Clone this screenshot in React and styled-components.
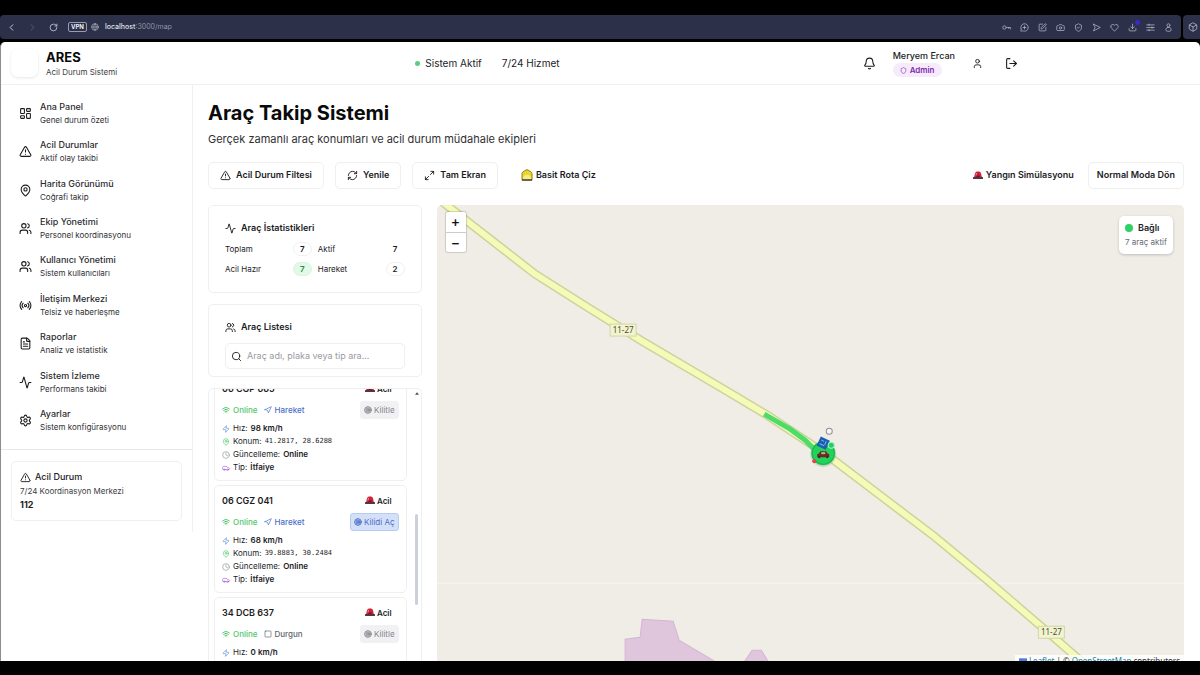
import React, { useEffect, useRef } from 'react';
import styled, { createGlobalStyle } from 'styled-components';
import {
  Activity, Bell, Box, Camera, Car, ChevronLeft, ChevronRight, Clock, Download, FileText, Globe,
  Heart, LayoutDashboard, LogOut, MapPin, Maximize2, MessageCirclePlus, Navigation, Radio,
  RefreshCw, RotateCw, Search, Settings, Shield, ShieldCheck, Square,
  SquarePen, Target, TriangleAlert, User, Users, Wifi, Zap,
} from 'lucide-react';

const menu = [
  { icon: LayoutDashboard, title: 'Ana Panel', text: 'Genel durum özeti' },
  { icon: TriangleAlert, title: 'Acil Durumlar', text: 'Aktif olay takibi' },
  { icon: MapPin, title: 'Harita Görünümü', text: 'Coğrafi takip' },
  { icon: Users, title: 'Ekip Yönetimi', text: 'Personel koordinasyonu' },
  { icon: Users, title: 'Kullanıcı Yönetimi', text: 'Sistem kullanıcıları' },
  { icon: Radio, title: 'İletişim Merkezi', text: 'Telsiz ve haberleşme' },
  { icon: FileText, title: 'Raporlar', text: 'Analiz ve istatistik' },
  { icon: Activity, title: 'Sistem İzleme', text: 'Performans takibi' },
  { icon: Settings, title: 'Ayarlar', text: 'Sistem konfigürasyonu' },
];

const stats = [
  { label: 'Toplam', value: 7, tone: 'outline' },
  { label: 'Aktif', value: 7, tone: 'plain' },
  { label: 'Acil Hazır', value: 7, tone: 'green' },
  { label: 'Hareket', value: 2, tone: 'outline' },
];

const vehicles = [
  { plate: '06 CGP 665', moving: true, speed: 98, coords: '41.2817, 28.6288', locked: false },
  { plate: '06 CGZ 041', moving: true, speed: 68, coords: '39.8883, 30.2484', locked: true },
  { plate: '34 DCB 637', moving: false, speed: 0, coords: null, locked: false },
];

function lineIcon(d) {
  return function LineIcon({ size }) {
    return (
      <svg width={size} height={size} viewBox="0 0 24 24" fill="none" stroke="currentColor" strokeWidth="2" strokeLinejoin="round" strokeLinecap="round" aria-hidden="true">
        <path d={d} />
      </svg>
    );
  };
}

const KeyIcon = lineIcon('M11 12 A4.500 4.500 0 1 1 2 12 A4.500 4.500 0 1 1 11 12 H23 V16 M18 12 V15');
const SendIcon = lineIcon('M4 3 L22 12 L4 21 L8 12 Z');
const TuneIcon = lineIcon('M2 5 H22 M2 12 H22 M2 19 H22 M8 3 V7 M16 10 V14 M8 17 V21');
const PersonIcon = lineIcon('M16 6 A4 4 0 1 1 8 6 A4 4 0 1 1 16 6 M9 12 H15 Q19 13 19 18 Q19 22 15 22 H9 Q5 22 5 18 Q5 13 9 12');

const browserIcons = [
  KeyIcon, MessageCirclePlus, SquarePen, Camera, ShieldCheck, SendIcon, Heart, Download, TuneIcon, PersonIcon,
];

function Siren() {
  return (
    <svg width="10" height="9" viewBox="0 0 20 18" aria-hidden="true">
      <path d="M2 13 L4 5 Q5 1 8 1 H12 Q15 1 16 5 L18 13 Z" fill="#d01f38" />
      <path d="M7 4 L6 9" stroke="#f28a94" strokeWidth="2" />
      <path d="M7 13 V10 Q10 7 13 10 V13 Z" fill="#7d1022" />
      <rect x="0" y="12" width="20" height="4" rx="1" fill="#54363f" />
    </svg>
  );
}

function RouteIcon() {
  return (
    <svg width="12" height="12" viewBox="0 0 24 24" aria-hidden="true">
      <path d="M2 22 V9 Q2 7 4 6 L10 2 Q12 1 14 2 L20 6 Q22 7 22 9 V22 Z" fill="#ecd62c" stroke="#8d7c28" strokeWidth="2" />
      <path d="M4 21 V16 L8 12 H16 L20 16 V21 Z" fill="#f6ec86" />
      <path d="M2 22 H22" stroke="#51491f" strokeWidth="3" />
    </svg>
  );
}

function MapDrawing() {
  const road = 'M-4 -12 L8 -1 L98 69 L150 102 L205 136 L283 182 L330 210 L386 247 L498 332 L550 375 L614 430 L660 470';
  return (
    <MapSvg viewBox="0 0 747 461" preserveAspectRatio="xMidYMin slice" aria-hidden="true">
      <path d="M0 378 H747" stroke="#f7f5f1" />
      <path d="M188 461 V434 L203 432 L205 414 L236 416 L242 435 L286 461 Z" fill="#dfc6dd" stroke="#d3b6d2" />
      <path d="M304 461 L315 445 H324 L334 461 Z" fill="#dfc6dd" stroke="#d3b6d2" />
      <path d={road} fill="none" stroke="#cdd39a" strokeWidth="9" strokeLinejoin="round" />
      <path d={road} fill="none" stroke="#f5fab9" strokeWidth="6" strokeLinejoin="round" />
      <path d="M327 209 L353 224 L368 235 L379 246" fill="none" stroke="#4bdc6a" strokeWidth="5" />
      {[[186, 125], [614, 427]].map(([x, y]) => (
        <g key={x}>
          <rect x={x - 13} y={y - 6} width="26" height="12" fill="#f2f4d0" stroke="#d3d6a6" />
          <text x={x} y={y + 3} textAnchor="middle" fontSize="8" fontFamily="'Noto Sans', sans-serif" fill="#4b4d33">11-27</text>
        </g>
      ))}
      <circle cx="386" cy="249" r="13" fill="#9a9a90" opacity="0.3" />
      <circle cx="386" cy="248" r="12" fill="#23d15d" />
      <circle cx="386" cy="248" r="11" fill="none" stroke="#1db450" />
      <g transform="rotate(25 386 238)">
        <rect x="381" y="233" width="10" height="10" fill="#1d5fae" />
        <path d="M383 236 h3 M388 235 v4 M383 240 h5" stroke="#6fb2ee" />
      </g>
      <path d="M380 252 V249 L382 248 L383 246 H389 L390 248 L392 249 V252 Z" fill="#6e2a1c" />
      <path d="M384 248 H388" stroke="#9dc0a4" strokeWidth="2" />
      <circle cx="382" cy="252" r="1" fill="#1d2a1e" />
      <circle cx="390" cy="252" r="1" fill="#1d2a1e" />
      <circle cx="394" cy="240" r="3" fill="#22cf63" stroke="#a9f2c1" />
      <circle cx="377" cy="256" r="2" fill="#e2434b" />
      <circle cx="392" cy="226" r="3" fill="#f6f5f3" stroke="#8f8c98" />
    </MapSvg>
  );
}

function VehicleCard({ vehicle }) {
  const { plate, moving, speed, coords, locked } = vehicle;
  return (
    <VehicleWrapper>
      <VehicleTop>
        <Plate>{plate}</Plate>
        <Urgent><Siren /> Acil</Urgent>
      </VehicleTop>
      <VehicleTop>
        <States>
          <State $color="#51c76d"><Wifi size={8} strokeWidth={3} /> Online</State>
          <State $color={moving ? '#4a70cb' : '#60656e'}>
            {moving ? <Navigation size={8} /> : <Square size={8} />}
            {moving ? 'Hareket' : 'Durgun'}
          </State>
        </States>
        <LockButton type="button" $locked={locked}>
          <Target size={8} strokeWidth={3} />
          {locked ? 'Kilidi Aç' : 'Kilitle'}
        </LockButton>
      </VehicleTop>
      <Details>
        <Detail $color="#5b93dd"><Zap size={8} /> Hız: <b>{speed} km/h</b></Detail>
        {coords && (
          <>
            <Detail $color="#51c76d"><MapPin size={8} /> Konum: <Coords>{coords}</Coords></Detail>
            <Detail $color="#8f949c"><Clock size={8} /> Güncelleme: <b>Online</b></Detail>
            <Detail $color="#a65fd6"><Car size={8} /> Tip: <b>İtfaiye</b></Detail>
          </>
        )}
      </Details>
    </VehicleWrapper>
  );
}

export default function App() {
  const listRef = useRef(null);

  useEffect(() => {
    listRef.current.scrollTop = 22;
  }, []);

  return (
    <Screen>
      <GlobalStyle />
      <Browser>
        <BrowserBar>
          <BarButton type="button" aria-label="Geri"><ChevronLeft size={11} /></BarButton>
          <BarButton type="button" aria-label="İleri" $dim><ChevronRight size={11} /></BarButton>
          <BarButton type="button" aria-label="Yeniden yükle"><RotateCw size={9} /></BarButton>
          <Vpn>VPN</Vpn>
          <Globe size={8} />
          <Address><b>localhost</b>:3000/map</Address>
          <BarIcons>
            {browserIcons.map((Icon, i) => (
              <BarIcon key={i} $dot={Icon === Download}><Icon size={9} /></BarIcon>
            ))}
          </BarIcons>
        </BrowserBar>
        <BrowserSide><Box size={10} /></BrowserSide>
      </Browser>

      <Page>
        <Header>
          <HeaderInner>
            <Brand>
              <Logo />
              <div>
                <BrandName>ARES</BrandName>
                <Small>Acil Durum Sistemi</Small>
              </div>
            </Brand>
            <Status>
              <Live>Sistem Aktif</Live>
              <span>7/24 Hizmet</span>
            </Status>
            <Account>
              <IconButton type="button" aria-label="Bildirimler"><Bell size={13} /></IconButton>
              <div>
                <UserName>Meryem Ercan</UserName>
                <Role><Shield size={7} /> Admin</Role>
              </div>
              <IconButton type="button" aria-label="Profil"><User size={11} /></IconButton>
              <IconButton type="button" aria-label="Çıkış"><LogOut size={13} /></IconButton>
            </Account>
          </HeaderInner>
        </Header>

        <Body>
          <Sidebar>
            <Nav>
              {menu.map(({ icon: Icon, title, text }) => (
                <NavItem key={title} href="#">
                  <Icon size={13} />
                  <span>
                    <NavTitle>{title}</NavTitle>
                    <NavText>{text}</NavText>
                  </span>
                </NavItem>
              ))}
            </Nav>
            <SidebarFooter>
              <HelpCard>
                <HelpTitle><TriangleAlert size={11} /> Acil Durum</HelpTitle>
                <Small>7/24 Koordinasyon Merkezi</Small>
                <HelpNumber>112</HelpNumber>
              </HelpCard>
            </SidebarFooter>
          </Sidebar>

          <Main>
            <Title>Araç Takip Sistemi</Title>
            <Subtitle>Gerçek zamanlı araç konumları ve acil durum müdahale ekipleri</Subtitle>

            <Toolbar>
              <Button type="button"><TriangleAlert size={11} /> Acil Durum Filtesi</Button>
              <Button type="button"><RefreshCw size={11} /> Yenile</Button>
              <Button type="button"><Maximize2 size={11} /> Tam Ekran</Button>
              <Button type="button" $ghost><RouteIcon /> Basit Rota Çiz</Button>
              <Spacer />
              <Button type="button" $ghost><Siren /> Yangın Simülasyonu</Button>
              <Button type="button" $tight>Normal Moda Dön</Button>
            </Toolbar>

            <Content>
              <Side>
                <Card>
                  <CardTitle><Activity size={11} /> Araç İstatistikleri</CardTitle>
                  <Stats>
                    {stats.map(({ label, value, tone }) => (
                      <Stat key={label}>
                        {label}
                        <Badge $tone={tone}>{value}</Badge>
                      </Stat>
                    ))}
                  </Stats>
                </Card>
                <Card $short>
                  <CardTitle><Users size={11} /> Araç Listesi</CardTitle>
                  <SearchBox>
                    <Search size={11} />
                    <SearchInput type="text" aria-label="Araç ara" placeholder="Araç adı, plaka veya tip ara..." />
                  </SearchBox>
                </Card>
                <ListBox>
                  <List ref={listRef}>
                    {vehicles.map((vehicle) => <VehicleCard key={vehicle.plate} vehicle={vehicle} />)}
                  </List>
                  <ScrollTrack>
                    <ScrollArrow viewBox="0 0 6 4"><path d="M0 4 L3 0 L6 4 Z" /></ScrollArrow>
                    <ScrollThumb />
                    <ScrollArrow viewBox="0 0 6 4"><path d="M0 0 L3 4 L6 0 Z" /></ScrollArrow>
                  </ScrollTrack>
                </ListBox>
              </Side>

              <MapPanel>
                <MapDrawing />
                <ZoomControl>
                  <ZoomButton type="button" aria-label="Yakınlaştır">+</ZoomButton>
                  <ZoomButton type="button" aria-label="Uzaklaştır">−</ZoomButton>
                </ZoomControl>
                <Connection>
                  <Connected>Bağlı</Connected>
                  <ActiveCount>7 araç aktif</ActiveCount>
                </Connection>
                <Attribution>
                  <Flag viewBox="0 0 12 8">
                    <path fill="#4c7be1" d="M0 0h12v4H0z" />
                    <path fill="#ffd500" d="M0 4h12v3H0z" />
                    <path fill="#e0bc00" d="M0 7h12v1H0z" />
                  </Flag>{' '}
                  <a href="#">Leaflet</a> <i>|</i> © <a href="#">OpenStreetMap</a> contributors
                </Attribution>
              </MapPanel>
            </Content>
          </Main>
        </Body>
      </Page>
    </Screen>
  );
}

const GlobalStyle = createGlobalStyle`
  * {
    box-sizing: border-box;
  }
  body {
    margin: 0;
    background: #000;
    color: #1c1c1f;
    font-family: Inter, sans-serif;
    font-size: 10px;
    line-height: 14px;
  }
  button, input {
    font: inherit;
    color: inherit;
  }
  a {
    color: inherit;
    text-decoration: none;
  }
  svg {
    flex-shrink: 0;
  }
`

const Screen = styled.div`
  height: 100vh;
  padding: 15px 0 14px;
  display: flex;
  flex-direction: column;
  gap: 3px;
`

const Browser = styled.div`
  display: flex;
  gap: 2px;
  height: 24px;
  color: #b4b6c6;
`

const BrowserBar = styled.div`
  flex: 1;
  display: flex;
  align-items: center;
  padding: 0 8px 0 5px;
  border-radius: 4px;
  background: #2c3049;
`

const BrowserSide = styled.div`
  display: flex;
  align-items: center;
  width: 17px;
  padding-left: 5px;
  border-radius: 4px 0 0 4px;
  background: #2c3049;
`

const BarButton = styled.button`
  display: flex;
  justify-content: center;
  width: 12px;
  margin-right: 9px;
  padding: 0;
  border: 0;
  background: none;
  color: ${(props) => (props.$dim ? '#5b5f79' : '#d5d7e2')};
`

const Vpn = styled.span`
  margin-right: 4px;
  padding: 0 2px;
  border: 1px solid #9a9cae;
  border-radius: 2px;
  color: #eceef5;
  font-size: 6px;
  font-weight: 700;
  line-height: 8px;
`

const Address = styled.span`
  margin-left: 6px;
  color: #9193a6;
  font-size: 7px;

  b {
    color: #dfe0ea;
    font-weight: 500;
  }
`

const BarIcons = styled.div`
  display: flex;
  gap: 9px;
  margin-left: auto;
`

const BarIcon = styled.span`
  position: relative;
  display: flex;

  &::after {
    content: '';
    display: ${(props) => (props.$dot ? 'block' : 'none')};
    position: absolute;
    top: -3px;
    right: -3px;
    width: 5px;
    height: 5px;
    border-radius: 50%;
    background: #4326c9;
  }
`

const Page = styled.div`
  flex: 1;
  min-height: 0;
  display: flex;
  flex-direction: column;
  overflow: hidden;
  border-left: 1px solid #8c8c92;
  border-radius: 5px 5px 0 0;
  background: #fff;
`

const Header = styled.header`
  border-bottom: 1px solid #f0f0f1;
`

const HeaderInner = styled.div`
  display: flex;
  align-items: center;
  justify-content: space-between;
  max-width: 1032px;
  height: 42px;
  padding: 0 10px;
`

const Brand = styled.div`
  display: flex;
  align-items: center;
  gap: 8px;
`

const Logo = styled.div`
  width: 27px;
  height: 28px;
  border-radius: 7px;
  background: #fff;
  box-shadow: 0 1px 3px rgba(0, 0, 0, 0.1);
`

const BrandName = styled.div`
  color: #0a0a0a;
  font-size: 13px;
  font-weight: 700;
  line-height: 17px;
`

const Small = styled.div`
  color: #3d3d42;
  font-size: 8px;
  line-height: 12px;
`

const Status = styled.div`
  display: flex;
  gap: 20px;
`

const Live = styled.span`
  display: flex;
  align-items: center;
  gap: 5px;

  &::before {
    content: '';
    width: 5px;
    height: 5px;
    border-radius: 50%;
    background: #58cf80;
  }
`

const Account = styled.div`
  display: flex;
  align-items: center;
  gap: 12px;
`

const UserName = styled.div`
  font-size: 9px;
  font-weight: 500;
`

const Role = styled.span`
  display: flex;
  align-items: center;
  gap: 3px;
  width: fit-content;
  padding: 0 7px;
  border-radius: 7px;
  background: #f6eafd;
  color: #7e2ba8;
  font-size: 8px;
  font-weight: 600;
`

const IconButton = styled.button`
  display: flex;
  padding: 0 5px;
  border: 0;
  background: none;
`

const Body = styled.div`
  flex: 1;
  min-height: 0;
  display: flex;
  align-items: flex-start;
`

const Sidebar = styled.aside`
  display: flex;
  flex-direction: column;
  width: 192px;
  min-height: 447px;
  border-right: 1px solid #f0f0f1;
`

const Nav = styled.nav`
  flex: 1;
  display: flex;
  flex-direction: column;
  padding: 9px 10px;
`

const NavItem = styled.a`
  flex: 1;
  display: flex;
  align-items: center;
  gap: 8px;
  padding-left: 8px;
`

const NavTitle = styled.span`
  display: block;
  color: #2d2d31;
  font-size: 9px;
  font-weight: 500;
`

const NavText = styled.span`
  display: block;
  color: #303034;
  font-size: 8px;
  line-height: 13px;
`

const SidebarFooter = styled.div`
  padding: 11px 10px;
  border-top: 1px solid #e8e8ea;
`

const HelpCard = styled.div`
  padding: 7px 8px;
  border: 1px solid #f0f0f1;
  border-radius: 5px;
`

const HelpTitle = styled.div`
  display: flex;
  align-items: center;
  gap: 4px;
  font-size: 9px;
  font-weight: 500;
  line-height: 16px;
`

const HelpNumber = styled.div`
  font-size: 9px;
  font-weight: 700;
  line-height: 16px;
`

const Main = styled.main`
  flex: 1;
  min-width: 0;
  padding: 14px 16px 0 15px;
`

const Title = styled.h1`
  margin: 0;
  color: #0a0a0a;
  font-size: 20px;
  font-weight: 700;
  line-height: 28px;
`

const Subtitle = styled.p`
  margin: 4px 0 0;
  color: #303034;
  font-size: 11px;
  line-height: 16px;
`

const Toolbar = styled.div`
  display: flex;
  align-items: center;
  gap: 11px;
  margin: 15px 0 16px;
`

const Button = styled.button`
  display: flex;
  align-items: center;
  gap: ${(props) => (props.$ghost ? '3px' : '5px')};
  height: 27px;
  padding: 0 ${(props) => (props.$tight ? '8px' : '11px')} 1px;
  ${(props) => (props.$ghost ? 'padding-right: 2px;' : '')}
  border: 1px solid ${(props) => (props.$ghost ? 'transparent' : '#efeff0')};
  border-radius: 5px;
  background: #fff;
  font-size: 9px;
  font-weight: 600;
  white-space: nowrap;
`

const Spacer = styled.div`
  flex: 1;
`

const Content = styled.div`
  display: grid;
  grid-template-columns: 2fr 7fr;
  gap: 15px;
  height: calc(100vh - 214px);
`

const Side = styled.div`
  display: flex;
  flex-direction: column;
  gap: 11px;
  min-width: 0;
  min-height: 0;
`

const Card = styled.section`
  padding: ${(props) => (props.$short ? '14px 16px 7px' : '14px 16px 16px')};
  border: 1px solid #efeff0;
  border-radius: 5px;
`

const CardTitle = styled.h2`
  display: flex;
  align-items: center;
  gap: 5px;
  margin: 0;
  font-size: 9px;
  font-weight: 600;
  line-height: 16px;
`

const Stats = styled.div`
  display: grid;
  grid-template-columns: 1fr 1fr;
  gap: 6px;
  margin-top: 6px;
`

const Stat = styled.div`
  display: flex;
  align-items: center;
  justify-content: space-between;
  font-size: 8px;
`

const Badge = styled.span`
  min-width: 19px;
  border: 1px solid ${(props) => (props.$tone === 'plain' ? 'transparent' : props.$tone === 'green' ? '#d8f5df' : '#f0f0f1')};
  border-radius: 8px;
  background: ${(props) => (props.$tone === 'green' ? '#e2f9e8' : '#fff')};
  color: ${(props) => (props.$tone === 'green' ? '#2f8a4a' : 'inherit')};
  font-weight: 600;
  line-height: 12px;
  text-align: center;
`

const SearchBox = styled.label`
  display: flex;
  align-items: center;
  gap: 5px;
  height: 26px;
  margin-top: 8px;
  padding-left: 5px;
  border: 1px solid #efeff0;
  border-radius: 5px;
`

const SearchInput = styled.input`
  flex: 1;
  min-width: 0;
  padding: 0;
  border: 0;
  outline: 0;
  background: none;
  font-size: 9px;

  &::placeholder {
    color: #9a9aa0;
  }
`

const ListBox = styled.section`
  flex: 1;
  display: flex;
  min-height: 0;
  padding-left: 5px;
  border: 1px solid #efeff0;
  border-bottom: 0;
  border-radius: 5px 5px 0 0;
`

const List = styled.div`
  flex: 1;
  overflow: hidden;
  display: flex;
  flex-direction: column;
  gap: 4px;
  padding-top: 5px;
`

const VehicleWrapper = styled.article`
  flex-shrink: 0;
  padding: 6px 7px;
  border: 1px solid #efeff0;
  border-radius: 5px;
`

const VehicleTop = styled.div`
  display: flex;
  align-items: center;
  justify-content: space-between;
  height: 17px;

  & + & {
    margin-top: 4px;
  }
`

const Plate = styled.h3`
  margin: 0;
  font-size: 9px;
  font-weight: 600;
`

const Urgent = styled.span`
  display: flex;
  align-items: center;
  gap: 2px;
  padding-right: 7px;
  font-size: 8px;
  font-weight: 600;
`

const States = styled.div`
  display: flex;
  gap: 6px;
`

const State = styled.span`
  display: flex;
  align-items: center;
  gap: 3px;
  color: ${(props) => props.$color};
  font-size: 8px;
  font-weight: 500;
`

const LockButton = styled.button`
  display: flex;
  align-items: center;
  gap: 2px;
  padding: 1px 3px;
  border: 1px solid ${(props) => (props.$locked ? '#b5cbf2' : '#f1f1f3')};
  border-radius: 3px;
  background: ${(props) => (props.$locked ? '#d3e0f8' : '#f1f1f3')};
  color: ${(props) => (props.$locked ? '#4a6fc8' : '#85868c')};
  font-size: 8px;
`

const Details = styled.div`
  margin-top: 4px;
`

const Detail = styled.div`
  display: flex;
  align-items: center;
  gap: 3px;
  font-size: 8px;
  line-height: 13px;

  svg {
    color: ${(props) => props.$color};
  }

  b {
    font-weight: 600;
  }
`

const Coords = styled.span`
  font-family: 'DejaVu Sans Mono', monospace;
  font-size: 7px;
`

const ScrollTrack = styled.div`
  display: flex;
  flex-direction: column;
  align-items: center;
  justify-content: space-between;
  margin: 3px 2px 1px 8px;
`

const ScrollThumb = styled.div`
  width: 3px;
  height: 91px;
  margin-top: 62px;
  border-radius: 2px;
  background: #ccd1d9;
`

const ScrollArrow = styled.svg`
  width: 4px;
  height: 3px;
  fill: #505050;
`

const MapPanel = styled.section`
  position: relative;
  overflow: hidden;
  border-radius: 5px 5px 0 0;
  background: #f0ede6;
`

const MapSvg = styled.svg`
  display: block;
  width: 100%;
  height: 100%;
`

const ZoomControl = styled.div`
  position: absolute;
  top: 7px;
  left: 9px;
  border-radius: 2px;
  background: #fff;
  box-shadow: 0 0 1px 1px rgba(0, 0, 0, 0.15);
`

const ZoomButton = styled.button`
  display: block;
  width: 20px;
  height: 20px;
  padding: 0;
  border: 0;
  background: none;
  color: #111;
  font-size: 14px;
  font-weight: 500;

  & + & {
    border-top: 1px solid #cccccc;
  }
`

const Connection = styled.div`
  position: absolute;
  top: 11px;
  right: 11px;
  padding: 5px 6px;
  border-radius: 5px;
  background: #fff;
  box-shadow: 0 1px 3px rgba(0, 0, 0, 0.2);
`

const Connected = styled.div`
  display: flex;
  align-items: center;
  gap: 5px;
  font-size: 9px;
  font-weight: 600;

  &::before {
    content: '';
    width: 8px;
    height: 8px;
    border-radius: 50%;
    background: #2fd162;
  }
`

const ActiveCount = styled.div`
  color: #666a73;
  font-size: 8px;
`

const Attribution = styled.div`
  position: absolute;
  right: 0;
  bottom: 0;
  padding: 0 4px;
  background: rgba(255, 255, 255, 0.8);
  color: #333;
  font-family: 'Noto Sans', sans-serif;
  font-size: 8px;
  line-height: 11px;

  a {
    color: #1a7fae;
  }

  i {
    font-style: normal;
  }
`

const Flag = styled.svg`
  width: 8px;
  height: 6px;
`
